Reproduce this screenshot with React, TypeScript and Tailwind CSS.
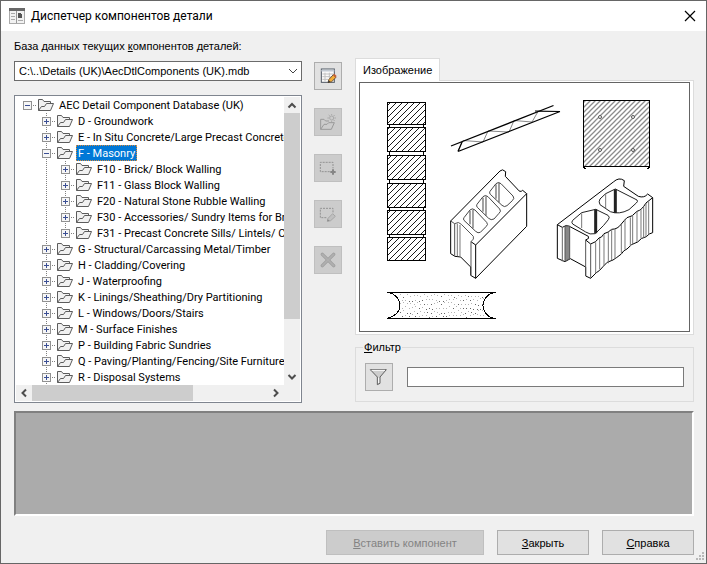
import React, { useState } from 'react';

interface TreeNode {
  label: string;
  level: number;
  open?: boolean;
  last?: boolean;
}

const nodes: TreeNode[] = [
  { label: 'AEC Detail Component Database (UK)', level: 0, open: true },
  { label: 'D - Groundwork', level: 1 },
  { label: 'E - In Situ Concrete/Large Precast Concrete', level: 1 },
  { label: 'F - Masonry', level: 1, open: true },
  { label: 'F10 - Brick/ Block Walling', level: 2 },
  { label: 'F11 - Glass Block Walling', level: 2 },
  { label: 'F20 - Natural Stone Rubble Walling', level: 2 },
  { label: 'F30 - Accessories/ Sundry Items for Brick', level: 2 },
  { label: 'F31 - Precast Concrete Sills/ Lintels/ Copings', level: 2, last: true },
  { label: 'G - Structural/Carcassing Metal/Timber', level: 1 },
  { label: 'H - Cladding/Covering', level: 1 },
  { label: 'J - Waterproofing', level: 1 },
  { label: 'K - Linings/Sheathing/Dry Partitioning', level: 1 },
  { label: 'L - Windows/Doors/Stairs', level: 1 },
  { label: 'M - Surface Finishes', level: 1 },
  { label: 'P - Building Fabric Sundries', level: 1 },
  { label: 'Q - Paving/Planting/Fencing/Site Furniture', level: 1 },
  { label: 'R - Disposal Systems', level: 1 },
];

const FolderIcon = () => (
  <svg width="20" height="16" viewBox="0 0 20 16" className="shrink-0" fill="#f1f1f1" stroke="#5c5c5c">
    <path d="M1.5 13.5V2.5H5.5L7 4.5H13.5V7" />
    <path d="M1.5 13.5L4.5 9.5H7.5L9.5 6.5H16.5L13.5 13.5Z" />
  </svg>
);

// Expander box together with the dotted lines that join it to its neighbours
const Expander = ({ node }: { node: TreeNode }) => (
  <svg width="19" height="16" viewBox="0 0 19 16" shapeRendering="crispEdges" fill="none">
    {node.level > 0 && (
      <path d={node.last ? 'M9.5 0V8' : 'M9.5 0V16'} stroke="#808080" strokeDasharray="1 1" />
    )}
    <path d="M15 8.5H19" stroke="#808080" strokeDasharray="1 1" />
    <rect x="5.5" y="4.5" width="8" height="8" fill="#f6f6f6" stroke="#919191" />
    <path d={node.open ? 'M7 8.5H12' : 'M7 8.5H12M9.5 6V11'} stroke="#3b4f94" />
  </svg>
);

const Guide = ({ line }: { line: boolean }) => (
  <svg width="19" height="16" viewBox="0 0 19 16" shapeRendering="crispEdges" className="shrink-0">
    {line && <path d="M9.5 0V16" stroke="#808080" strokeDasharray="1 1" />}
  </svg>
);

const Arrow = ({ d }: { d: string }) => (
  <svg width="16" height="16" viewBox="0 0 16 16" fill="none" stroke="#4d4d4d" strokeWidth="2">
    <path d={d} />
  </svg>
);

interface ToolButtonProps {
  label: string;
  disabled?: boolean;
  children: React.ReactNode;
}

const ToolButton = ({ label, disabled, children }: ToolButtonProps) => (
  <button
    type="button"
    aria-label={label}
    disabled={disabled}
    className="size-7 shrink-0 border border-[#adadad] bg-[#e1e1e1] disabled:border-[#bfbfbf] disabled:bg-[#cccccc]"
  >
    <svg width="26" height="26" viewBox="3 3 78 78" fill="none" strokeWidth="3">
      {children}
    </svg>
  </button>
);

const ComponentTree = () => {
  const [selected, setSelected] = useState('F - Masonry');

  return (
    <div className="flex h-[308px] flex-col border border-[#7f858f] bg-white p-px">
      <div className="flex min-h-0 flex-1">
        <ul role="tree" className="min-w-0 flex-1 overflow-hidden pl-[2px] font-['Roboto',sans-serif] text-black">
          {nodes.map(node => (
            <li key={node.label} role="treeitem" aria-selected={selected === node.label} className="flex h-4 items-center">
              {node.level > 0 && <Guide line={false} />}
              {node.level > 1 && <Guide line />}
              <button type="button" aria-label={`Toggle ${node.label}`} className="h-4 shrink-0">
                <Expander node={node} />
              </button>
              <FolderIcon />
              <button
                type="button"
                onClick={() => setSelected(node.label)}
                className={
                  selected === node.label
                    ? 'h-4 shrink-0 whitespace-nowrap bg-[#0078d7] px-[2px] pt-[2px] leading-[14px] text-white outline-1 -outline-offset-1 outline-dotted outline-[#d98a3a]'
                    : 'h-4 shrink-0 whitespace-nowrap px-[2px] pt-[2px] leading-[14px]'
                }
              >
                {node.label}
              </button>
            </li>
          ))}
        </ul>
        <div className="flex w-4 shrink-0 flex-col bg-[#f0f0f0]">
          <Arrow d="M4.5 10.5L8 7L11.5 10.5" />
          <div className="h-[206px] bg-[#cdcdcd]" />
          <div className="flex-1" />
          <Arrow d="M4.5 6L8 9.5L11.5 6" />
        </div>
      </div>
      <div className="flex h-4 shrink-0 bg-[#f0f0f0] pr-4">
        <Arrow d="M10 4.5L6.5 8L10 11.5" />
        <div className="w-[161px] bg-[#cdcdcd]" />
        <div className="flex-1" />
        <Arrow d="M6 4.5L9.5 8L6 11.5" />
      </div>
    </div>
  );
};

const bricks = [[101, 22], [126, 24], [154, 24], [182, 24], [209, 24], [236, 23]];

// x, y and shade of the dots scattered over the concrete section
const specks = Array.from({ length: 150 }, (_, i) => {
  const row = Math.floor(i / 25);
  const jitter = Math.abs(Math.sin(i * 12.9898) * 43758.5453) % 1;
  const x = 400 + (i % 25) * 3.4 + (row % 2) * 1.7;
  const y = 294 + row * 4 + jitter * 3 - 1;
  return [Math.round(x), Math.round(y), jitter];
});

const Preview = () => (
  <svg width="328" height="248" viewBox="360 82 328 248" className="shrink-0" fill="none" stroke="#000" shapeRendering="crispEdges" role="img" aria-label="Masonry">
    <defs>
      <pattern id="hatch" width="6" height="6" patternUnits="userSpaceOnUse" shapeRendering="auto">
        <path d="M-1 7L7 -1M-1 1L1 -1M5 7L7 5" stroke="#000" strokeWidth="0.9" />
      </pattern>
      <pattern id="grayHatch" width="5" height="5" patternUnits="userSpaceOnUse" shapeRendering="auto">
        <path d="M-1 6L6 -1M-1 1L1 -1M4 6L6 4" stroke="#8c8c8c" strokeWidth="1.3" />
      </pattern>
    </defs>

    {/* brick column */}
    {bricks.map(([y, h]) => (
      <rect key={y} x="387.5" y={y + 0.5} width="38" height={h} fill="url(#hatch)" />
    ))}
    <path d="M389.5 124V127M389.5 151V155M389.5 179V183M389.5 207V210M389.5 234V237M423.5 124V127M423.5 151V155M423.5 179V183M423.5 207V210M423.5 234V237" />

    {/* bed joint reinforcement */}
    <g shapeRendering="auto">
      <path d="M458 150L463 139.5L483 141L488 130L509 131L514 119.5L532 121L538 110.5L559 110.5" stroke="#888" />
      <path d="M451 145L553.5 104.5" strokeWidth="1.3" />
      <path d="M458 150.5L560 110.5M458 150.5L462 141M535 110L560 110.5" strokeWidth="1.2" />
    </g>

    {/* hatched plate */}
    <rect x="583.5" y="99.5" width="66" height="66" fill="url(#grayHatch)" />
    <path d="M583 166.5H585M648 166.5H650M584 167.5H586M647 167.5H649" />
    <g stroke="#555" fill="#fff" shapeRendering="auto">
      <circle cx="600" cy="116" r="1.5" />
      <circle cx="633" cy="116" r="1.5" />
      <circle cx="600" cy="149" r="1.5" />
      <circle cx="633" cy="149" r="1.5" />
    </g>

    {/* three-cell block */}
    <g transform="translate(440 160) scale(0.33333)" strokeWidth="3" shapeRendering="auto">
      <path d="M32 180L180 30Q187 22 197 32L196 46L232 84Q240 96 248 88L260 98V196L107 352L92 343V318L62 288L45 286L32 278Z" fill="#fff" />
      <path d="M107 352V252L260 98M107 252L93 242" />
      <path d="M32 180L44 188V284M44 188Q56 180 64 190L100 226Q104 234 93 242V343" stroke="#555" />
      <path d="M52 188V286M60 192V288" stroke="#777" />
      <g stroke="#444">
        <path d="M72 170L90 147Q97 140 105 147L140 184Q146 191 138 197L121 214Q114 218 107 211L72 178Q69 174 72 170Z" />
        <path d="M111 130L129 107Q136 100 144 107L179 144Q185 151 177 157L162 174Q153 179 146 172L112 139Q108 135 111 130Z" />
        <path d="M150 91L168 68Q175 61 183 68L219 105Q225 112 217 119L201 134Q193 140 186 133L151 100Q147 96 150 91Z" />
        <path d="M90 150V190M99 146V202M129 110V152M138 106V164M168 70V113M177 65V124" />
      </g>
    </g>

    {/* two-cell split-face block */}
    <g transform="translate(545 165) scale(0.33333)" strokeWidth="3" shapeRendering="auto">
      <path d="M37 176L205 48Q222 32 238 44L236 61L280 91Q298 97 308 84L323 95V200Q312 202 304 212Q288 215 278 228Q258 233 246 249Q236 252 229 264Q214 276 204 282Q184 286 174 302Q163 316 154 320L137 337L122 330V303L76 278L60 287L37 277Z" fill="#fff" />
      <path d="M37 176L52 184Q64 174 75 182L130 211Q135 218 122 222L137 234Q154 229 162 216Q170 216 177 203Q190 200 200 190Q218 190 229 174Q237 164 246 155Q262 153 276 136Q290 133 303 111L323 95" />
      <path d="M122 222V330M137 234V335" stroke="#555" />
      <path d="M52 184V286" stroke="#666" />
      <path d="M60 180H74V278L60 286Z" fill="#888" stroke="#555" />
      <path d="M152 229V322M164 216V310M177 204V300M190 197V292M200 190V283M210 188V278M229 174V263M240 160V250M256 154V240M263 148V235M276 136V228M288 130V217M296 122V215M303 111V210M311 106V205" stroke="#777" />
      <g stroke="#222">
        <path d="M83 163L110 140L152 130L189 148Q196 153 190 161L176 178L151 203Q134 207 122 198L83 174Q78 169 83 163Z" />
        <path d="M165 99L182 83L211 69L276 102Q280 106 274 111L252 131Q222 147 196 137L165 116Q160 107 165 99Z" />
        <path d="M110 142V186M182 84V127" stroke="#777" />
        <path d="M152 130V202M211 70V141" strokeWidth="9" />
      </g>
    </g>

    {/* section with concave ends */}
    {specks.map(([x, y, shade], i) => (
      <rect key={i} x={x} y={y} width="1" height="1" fill={shade > 0.7 ? '#666' : '#b4b4b4'} stroke="none" />
    ))}
    <path d="M387 291.5H496M387 317.5H496" />
    <path d="M387 291.5C394 291.5 400 298 400 304.5S394 316 387 317.5M496 291.5C489 291.5 483 298 483 304.5S489 317.5 496 317.5" />
  </svg>
);

const buttonClass =
  'h-[25px] border border-[#adadad] bg-[#e1e1e1] text-black disabled:border-[#bfbfbf] disabled:bg-[#cccccc] disabled:text-[#838383]';

const App = () => {
  const [filter, setFilter] = useState('');

  return (
    <div className="flex min-h-screen flex-col border border-[#666] bg-[#f0f0f0] font-['Liberation_Sans',sans-serif] text-[11px] leading-4 text-black">
      <header className="flex h-[30px] items-center bg-white pl-2 pr-[10px]">
        <svg width="16" height="16" viewBox="0 0 16 16" shapeRendering="crispEdges">
          <rect x="0.5" y="0.5" width="15" height="15" fill="#f2f2f2" stroke="#aaa" />
          <rect width="16" height="3" fill="#686868" />
          <path d="M2 5.5H6M2 8.5H6M2 11.5H6M9 12.5H14" stroke="#aaa" />
          <path d="M7.5 3V15" stroke="#999" />
          <path d="M9 5H11L13 7V10H9Z" fill="#555" />
        </svg>
        <h1 className="ml-[6px] flex-1 font-['Roboto',sans-serif] text-[12px] font-normal">Диспетчер компонентов детали</h1>
        <button type="button" aria-label="Закрыть окно">
          <svg width="12" height="12" viewBox="0 0 12 12" stroke="#000" strokeWidth="1.2">
            <path d="M1 1L11 11M11 1L1 11" />
          </svg>
        </button>
      </header>

      <main className="flex flex-1 flex-col pl-[13px] pr-3">
        <div className="flex">
          <section className="flex w-[288px] flex-col pt-[7px]">
            <label htmlFor="database" className="whitespace-nowrap">
              База данных текущих <u>к</u>омпонентов деталей:
            </label>
            <div className="relative mt-[7px]">
              <select id="database" className="block h-5 w-full appearance-none border border-[#6b6b6b] bg-white pl-1 pr-5">
                <option>C:\..\Details (UK)\AecDtlComponents (UK).mdb</option>
              </select>
              <svg width="10" height="6" viewBox="0 0 10 6" fill="none" stroke="#444" className="pointer-events-none absolute right-1 top-[7px]">
                <path d="M1 1L5 5L9 1" />
              </svg>
            </div>
            <div className="mt-[14px]">
              <ComponentTree />
            </div>
          </section>

          <div className="ml-3 mr-[13px] flex flex-col gap-[18px] pt-[31px]">
            <ToolButton label="Правка базы данных">
              <rect x="22" y="21" width="39" height="40" fill="#fafafa" stroke="#4f5864" />
              <path d="M22 26H61" stroke="#c3cbd4" strokeWidth="5" />
              <path d="M25 36H58M25 44H50M25 52H42M33 32V58M46 32V48" stroke="#c2c2c2" />
              <path d="M42 62L45 52L58 38L66 46L53 59Z" fill="#f4ad35" stroke="#6a5440" />
              <path d="M57 39L61 35L68 42L64 47Z" fill="#c3603a" stroke="none" />
              <path d="M42 62L44 55L49 60Z" fill="#333" stroke="none" />
            </ToolButton>
            <ToolButton label="Новая группа" disabled>
              <path d="M20 64V34H30L35 39H45M20 64L30 49H39L44 44H61L52 64Z" stroke="#999" />
              <circle cx="53" cy="30" r="6" stroke="#aaa" />
              <path d="M53 18V22M53 38V42M40 30H45M61 30H66M44 21L48 25M62 21L58 25M62 39L58 35" stroke="#aaa" />
            </ToolButton>
            <ToolButton label="Добавить компонент" disabled>
              <path d="M47 53H19V25H57V43" stroke="#929292" strokeDasharray="6 3" />
              <path d="M57 46V62M49 54H65" stroke="#858585" strokeWidth="6" />
            </ToolButton>
            <ToolButton label="Правка компонента" disabled>
              <path d="M37 53H19V25H57V38" stroke="#929292" strokeDasharray="6 3" />
              <path d="M40 64L42 55L56 41L64 49L50 62Z" fill="#c0c0c0" stroke="#a6a6a6" />
              <path d="M40 64L41 58L47 63Z" fill="#888" stroke="none" />
            </ToolButton>
            <ToolButton label="Удалить компонент" disabled>
              <path d="M25 25L59 59M59 25L25 59" stroke="#9f9f9f" strokeWidth="10" strokeLinecap="round" />
              <path d="M25 25L59 59M59 25L25 59" stroke="#b0b0b0" strokeWidth="5" strokeLinecap="round" />
            </ToolButton>
          </div>

          <section className="min-w-0 flex-1 pt-[27px]">
            <div role="tablist" className="flex">
              <button
                type="button"
                role="tab"
                aria-selected="true"
                className="relative -mb-px h-[23px] border border-b-0 border-[#dcdcdc] bg-white px-[7px]"
              >
                Изображение
              </button>
            </div>
            <div role="tabpanel" className="border border-[#dcdcdc] bg-white px-[3px] pb-[2px] pt-px">
              <div className="h-[250px] overflow-hidden border border-[#646464]">
                <Preview />
              </div>
            </div>
            <fieldset className="mt-1 border border-[#dcdcdc] px-[9px] pb-[10px] pt-[8px]">
              <legend className="-ml-[2px] px-px leading-4">
                <u>Ф</u>ильтр
              </legend>
              <div className="flex items-center gap-[14px]">
                <ToolButton label="Применить фильтр">
                  <path d="M16 20H64L45 42V61L37 65V42Z" fill="#cdcdcd" stroke="#5e5e5e" />
                  <path d="M20 22H60" stroke="#fff" />
                  <path d="M41 44V60" stroke="#fff" />
                </ToolButton>
                <input
                  type="text"
                  aria-label="Фильтр"
                  value={filter}
                  onChange={e => setFilter(e.target.value)}
                  className="h-5 min-w-0 flex-1 border border-[#7a7a7a] bg-white px-1"
                />
              </div>
            </fieldset>
          </section>
        </div>

        <div className="mt-2 h-[105px] border-2 border-b-white border-l-[#808080] border-r-white border-t-[#808080] bg-[#ababab]" />

        <footer className="mt-[14px] flex justify-end gap-[13px]">
          <button type="button" disabled className={`w-[158px] ${buttonClass}`}>
            <u>В</u>ставить компонент
          </button>
          <button type="button" className={`w-[92px] ${buttonClass}`}>
            <u>З</u>акрыть
          </button>
          <button type="button" className={`w-[92px] ${buttonClass}`}>
            <u>С</u>правка
          </button>
        </footer>
      </main>

      <svg width="10" height="10" viewBox="0 0 10 10" fill="#b8b8b8" className="absolute bottom-0.5 right-0.5">
        <path d="M7 0h2v2h-2zM4 3h2v2h-2zM7 3h2v2h-2zM1 6h2v2h-2zM4 6h2v2h-2zM7 6h2v2h-2z" />
      </svg>
    </div>
  );
};

export default App;
